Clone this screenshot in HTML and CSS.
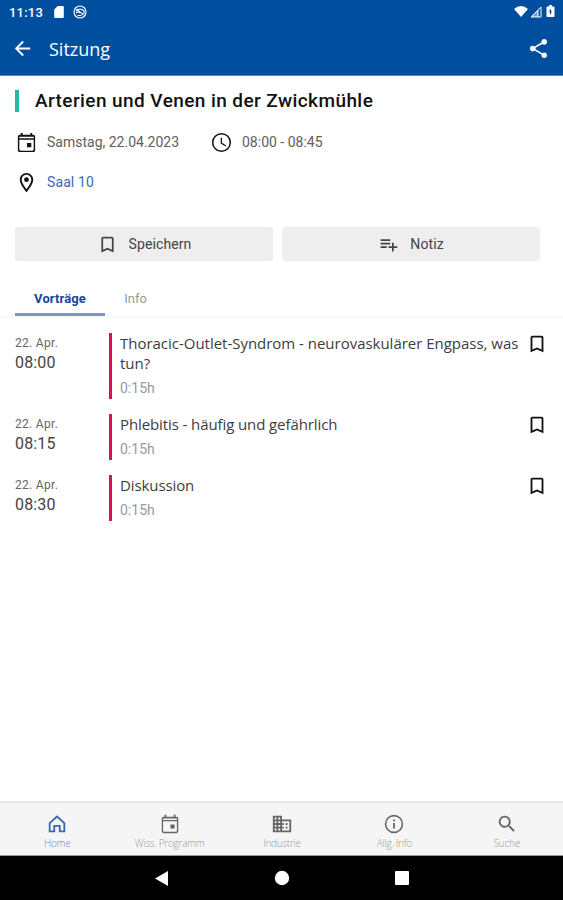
FILE: index.html
```html
<!DOCTYPE html>
<html lang="de">
<head>
    <meta charset="UTF-8">
    <meta name="viewport" content="width=device-width, initial-scale=1.0">
    <title>Sitzung</title>
    <link rel="stylesheet" href="styles.css">
</head>
<body>
    <svg class="sprite" width="0" height="0">
        <symbol id="bookmark" viewBox="0 0 24 24"><path d="M17 3H7c-1.1 0-2 .9-2 2v16l7-3 7 3V5c0-1.100-.9-2-2-2zm0 15-5-2.200L7 18V5h10v13z"/></symbol>
        <symbol id="event" viewBox="0 0 24 24"><path fill-rule="evenodd" d="M6 2h2v2h8V2h2v2h1q2 0 2 2v14q0 2-2 2H5q-2 0-2-2V6q0-2 2-2h1zM4.500 9v10q0 1.500 1.500 1.500h12q1.500 0 1.500-1.500V9zM4.500 6v1.500h15V6zM12.500 12.500h4.500v4.500h-4.500z"/></symbol>
    </svg>
    <div class="app">
        <header class="topbar">
            <div class="status">
                <span class="clock">11:13</span>
                <svg class="sd" viewBox="0 0 16 20"><path d="M6 0h8q2 0 2 2v16q0 2-2 2H2q-2 0-2-2V6z"/></svg>
                <svg class="sync" viewBox="0 0 14 14"><circle cx="7" cy="7" r="6"/><path d="M3 6q4-4 8 0v3M3.500 4l7 6M3 8q2-2 4 0M4.500 10.500h4"/></svg>
                <svg class="signals" viewBox="0 0 42 14"><path d="M0 4q7-6 14 0l-7 8z"/><path class="line" d="M27 2v10H17zM24 5v7"/><path d="M24 5v7h-7z" opacity=".45"/><path fill-rule="evenodd" d="M35 1.500V0h3v1.500h1.500q1 0 1 1V11q0 1-1 1h-6q-1 0-1-1V2.500q0-1 1-1zM36.500 4l-1.500 3h1v3l2-3.500h-1V4z"/></svg>
            </div>
            <div class="toolbar">
                <svg class="back" viewBox="0 0 24 24"><path d="M20 11H7.830l5.590-5.590L12 4l-8 8 8 8 1.410-1.410L7.830 13H20z"/></svg>
                <h1>Sitzung</h1>
                <svg class="share" viewBox="0 0 24 24"><path d="M18 16.080c-.76 0-1.440.3-1.960.77L8.910 12.700c.05-.23.09-.46.09-.7s-.04-.47-.09-.7l7.050-4.110c.54.5 1.250.81 2.040.81 1.660 0 3-1.340 3-3s-1.340-3-3-3-3 1.340-3 3c0 .24.04.47.09.7L8.040 9.810C7.500 9.310 6.790 9 6 9c-1.660 0-3 1.340-3 3s1.340 3 3 3c.79 0 1.500-.31 2.040-.81l7.120 4.160c-.05.21-.08.43-.08.65 0 1.610 1.310 2.920 2.920 2.920s2.920-1.310 2.920-2.920-1.310-2.920-2.920-2.920z"/></svg>
            </div>
        </header>
        <main>
            <h2>Arterien und Venen in der Zwickmühle</h2>
            <div class="meta">
                <div class="meta-item date"><svg><use href="#event"/></svg><span>Samstag, 22.04.2023</span></div>
                <div class="meta-item time"><svg viewBox="0 0 24 24"><path d="M12 2a10 10 0 1 0 0 20 10 10 0 0 0 0-20zm0 18.400a8.400 8.400 0 1 1 0-16.800 8.400 8.400 0 0 1 0 16.800zM12.500 7H11.200v6l5.050 3.150.65-1.130-4.400-2.670z"/></svg><span>08:00 - 08:45</span></div>
            </div>
            <div class="meta-item place"><svg viewBox="0 0 24 24"><path d="M12 2C8.130 2 5 5.130 5 9c0 5.250 7 13 7 13s7-7.750 7-13c0-3.870-3.130-7-7-7zM7 9c0-2.760 2.240-5 5-5s5 2.240 5 5c0 2.880-2.880 7.190-5 9.880C9.920 16.210 7 11.850 7 9z"/><circle cx="12" cy="9" r="2.500"/></svg><a>Saal 10</a></div>
            <div class="actions">
                <button><svg><use href="#bookmark"/></svg><span>Speichern</span></button>
                <button><svg viewBox="0 0 24 24"><path d="M14 10H3v2h11v-2zm0-4H3v2h11V6zm4 8v-4h-2v4h-4v2h4v4h2v-4h4v-2h-4zM3 16h7v-2H3v2z"/></svg><span>Notiz</span></button>
            </div>
            <nav class="tabs">
                <div class="tab active">Vorträge</div>
                <div class="tab">Info</div>
            </nav>
            <ul class="talks">
                <li>
                    <div class="when"><small>22. Apr.</small><span>08:00</span></div>
                    <div class="talk"><h3 class="long">Thoracic-Outlet-Syndrom - neurovaskulärer Engpass, was<br>tun?</h3><p>0:15h</p></div>
                    <svg><use href="#bookmark"/></svg>
                </li>
                <li>
                    <div class="when"><small>22. Apr.</small><span>08:15</span></div>
                    <div class="talk"><h3>Phlebitis - häufig und gefährlich</h3><p>0:15h</p></div>
                    <svg><use href="#bookmark"/></svg>
                </li>
                <li>
                    <div class="when"><small>22. Apr.</small><span>08:30</span></div>
                    <div class="talk"><h3>Diskussion</h3><p>0:15h</p></div>
                    <svg><use href="#bookmark"/></svg>
                </li>
            </ul>
        </main>
        <nav class="bottom-nav">
            <div class="nav-item active"><svg viewBox="0 0 24 24"><path fill-rule="evenodd" d="M3 10.500V21h7v-6h4v6h7V10.500L12 2.500zM5 11.400l7-6.200 7 6.200V19h-3v-6H8v6H5z"/></svg><span>Home</span></div>
            <div class="nav-item"><svg><use href="#event"/></svg><span>Wiss. Programm</span></div>
            <div class="nav-item"><svg viewBox="0 0 24 24"><path fill-rule="evenodd" d="M12 7V3H2v18h20V7H12zM6 19H4v-2h2v2zm0-4H4v-2h2v2zm0-4H4V9h2v2zm0-4H4V5h2v2zm4 12H8v-2h2v2zm0-4H8v-2h2v2zm0-4H8V9h2v2zm0-4H8V5h2v2zm10 12h-8v-2h2v-2h-2v-2h2v-2h-2V9h8v10zm-2-8h-2v2h2v-2zm0 4h-2v2h2v-2z"/></svg><span>Industrie</span></div>
            <div class="nav-item"><svg viewBox="0 0 24 24"><path d="M11 7h2v2h-2zm0 4h2v6h-2zm1-9a10 10 0 1 0 0 20 10 10 0 0 0 0-20zm0 18.300a8.300 8.300 0 1 1 0-16.600 8.300 8.300 0 0 1 0 16.600z"/></svg><span>Allg. Info</span></div>
            <div class="nav-item"><svg viewBox="0 0 24 24"><path d="M15.500 14h-.79l-.28-.27A6.500 6.500 0 1 0 13.730 14.430l.27.28v.79l5 4.990L20.490 19l-4.990-5zm-6 0a4.500 4.500 0 1 1 0-9 4.500 4.500 0 0 1 0 9z"/></svg><span>Suche</span></div>
        </nav>
        <div class="system-nav">
            <svg viewBox="0 0 16 16"><path d="M14 1v15L1 8.500z"/></svg>
            <svg viewBox="0 0 16 16"><circle cx="8" cy="8" r="7.200"/></svg>
            <svg viewBox="0 0 16 16"><rect x="1" y="1" width="14" height="14" rx="1"/></svg>
        </div>
    </div>
</body>
</html>
```
FILE: styles.css
```css
* {
    box-sizing: border-box;
}
body {
    margin: 0;
    background-color: #fff;
    color: #222;
    font-family: Roboto, sans-serif;
}
h1, h2, h3, p, ul {
    margin: 0;
    padding: 0;
    font-weight: 400;
}
svg {
    display: block;
    flex: none;
    fill: currentColor;
}
.sprite {
    position: absolute;
}
.app {
    height: 900px;
    display: flex;
    flex-direction: column;
    overflow: hidden;
}
.topbar {
    height: 76px;
    background-color: #004f9f;
    border-bottom: 1px solid #7180bb;
    color: #fff;
}
.status {
    height: 24px;
    display: flex;
    align-items: center;
    padding: 0 7px 0 9px;
}
.clock {
    width: 45px;
    font-size: 13px;
    font-weight: 500;
    letter-spacing: 0.2px;
}
.sd {
    width: 10px;
    height: 12px;
}
.sync {
    width: 14px;
    height: 14px;
    margin-left: 9px;
    fill: none;
    stroke: #fff;
    stroke-width: 1.1;
}
.signals {
    width: 42px;
    height: 14px;
    margin-left: auto;
}
.signals .line {
    fill: none;
    stroke: #fff;
}
.toolbar {
    height: 51px;
    display: flex;
    align-items: center;
    padding: 0 13px 2px 11px;
}
.back {
    width: 23px;
    height: 23px;
}
.toolbar h1 {
    margin-left: 15px;
    font: 500 18px/24px "Open Sans", sans-serif;
    letter-spacing: 0;
}
.share {
    width: 23px;
    height: 23px;
    margin-left: auto;
}
main {
    flex: 1;
}
h2 {
    height: 22px;
    margin: 14px 15px 0;
    padding-left: 16px;
    border-left: 4px solid #28b5a3;
    color: #111;
    font-size: 19px;
    font-weight: 500;
    letter-spacing: 0.42px;
    line-height: 22px;
}
.meta {
    display: flex;
    margin-top: 18px;
}
.meta-item {
    display: flex;
    align-items: center;
    height: 24px;
    margin-left: 15px;
    color: #606060;
    font-size: 14px;
}
.meta-item svg {
    width: 23px;
    height: 23px;
    margin-right: 9px;
    color: #111;
}
.date {
    width: 195px;
}
.time {
    margin-left: 0;
}
.place {
    margin-top: 16px;
}
.place a {
    color: #3b69b3;
    letter-spacing: 0.1px;
}
.actions {
    display: grid;
    grid-template-columns: 258px 258px;
    gap: 9px;
    margin: 33px 15px 0;
}
.actions button {
    height: 34px;
    display: flex;
    align-items: center;
    justify-content: center;
    padding: 0;
    border: none;
    border-radius: 3px;
    background-color: #eee;
    color: #444;
    font: 14px Roboto, sans-serif;
    letter-spacing: 0.1px;
}
.actions svg {
    width: 21px;
    height: 21px;
    margin-right: 11px;
}
.tabs {
    display: flex;
    height: 57px;
    padding: 20px 15px 0;
    border-bottom: 2px solid #f8f8f8;
}
.tab {
    height: 35px;
    width: 61px;
    color: #999;
    font-size: 13px;
    line-height: 35px;
    text-align: center;
}
.tab.active {
    width: 90px;
    border-bottom: 3px solid #8193c6;
    color: #17479e;
    font-weight: 700;
    letter-spacing: 0.1px;
}
.talks {
    padding: 15px 15px 0;
    list-style: none;
}
.talks li {
    display: flex;
    margin-bottom: 15px;
}
.when {
    width: 94px;
    display: flex;
    flex-direction: column;
    color: #444;
    font: 16px/20px Roboto, sans-serif;
    letter-spacing: 0.15px;
}
.when small {
    color: #666;
    font-size: 12px;
    letter-spacing: 0.3px;
}
.talk {
    flex: 1;
    padding-left: 8px;
    border-left: 3px solid #d4145a;
    white-space: nowrap;
}
.talk h3 {
    color: #3d3d3d;
    font: 15px/20px "Open Sans", sans-serif;
    letter-spacing: -0.1px;
}
.talk h3.long {
    letter-spacing: -0.02px;
}
.talk p {
    padding: 6px 0 1px;
    color: #999;
    font-size: 14px;
    line-height: 19px;
}
.talks svg {
    width: 22px;
    height: 22px;
    color: #111;
}
.bottom-nav {
    height: 55px;
    display: grid;
    grid-template-columns: repeat(5, 1fr);
    padding: 10px 0 0 1px;
    border-top: 2px solid #e8e8e8;
    border-bottom: 1px solid #999;
    background-color: #f5f5f5;
}
.nav-item {
    display: flex;
    flex-direction: column;
    align-items: center;
    color: #666;
}
.nav-item svg {
    width: 22px;
    height: 22px;
}
.nav-item span {
    color: #999;
    font: 300 10px/16px "Open Sans", sans-serif;
    letter-spacing: -0.25px;
}
.nav-item.active svg {
    color: #3867b4;
}
.nav-item.active span {
    color: #7987c3;
}
.system-nav {
    height: 44px;
    display: flex;
    justify-content: center;
    align-items: center;
    gap: 104px;
    background-color: #000;
    color: #fff;
}
.system-nav svg {
    width: 16px;
    height: 16px;
}
```
